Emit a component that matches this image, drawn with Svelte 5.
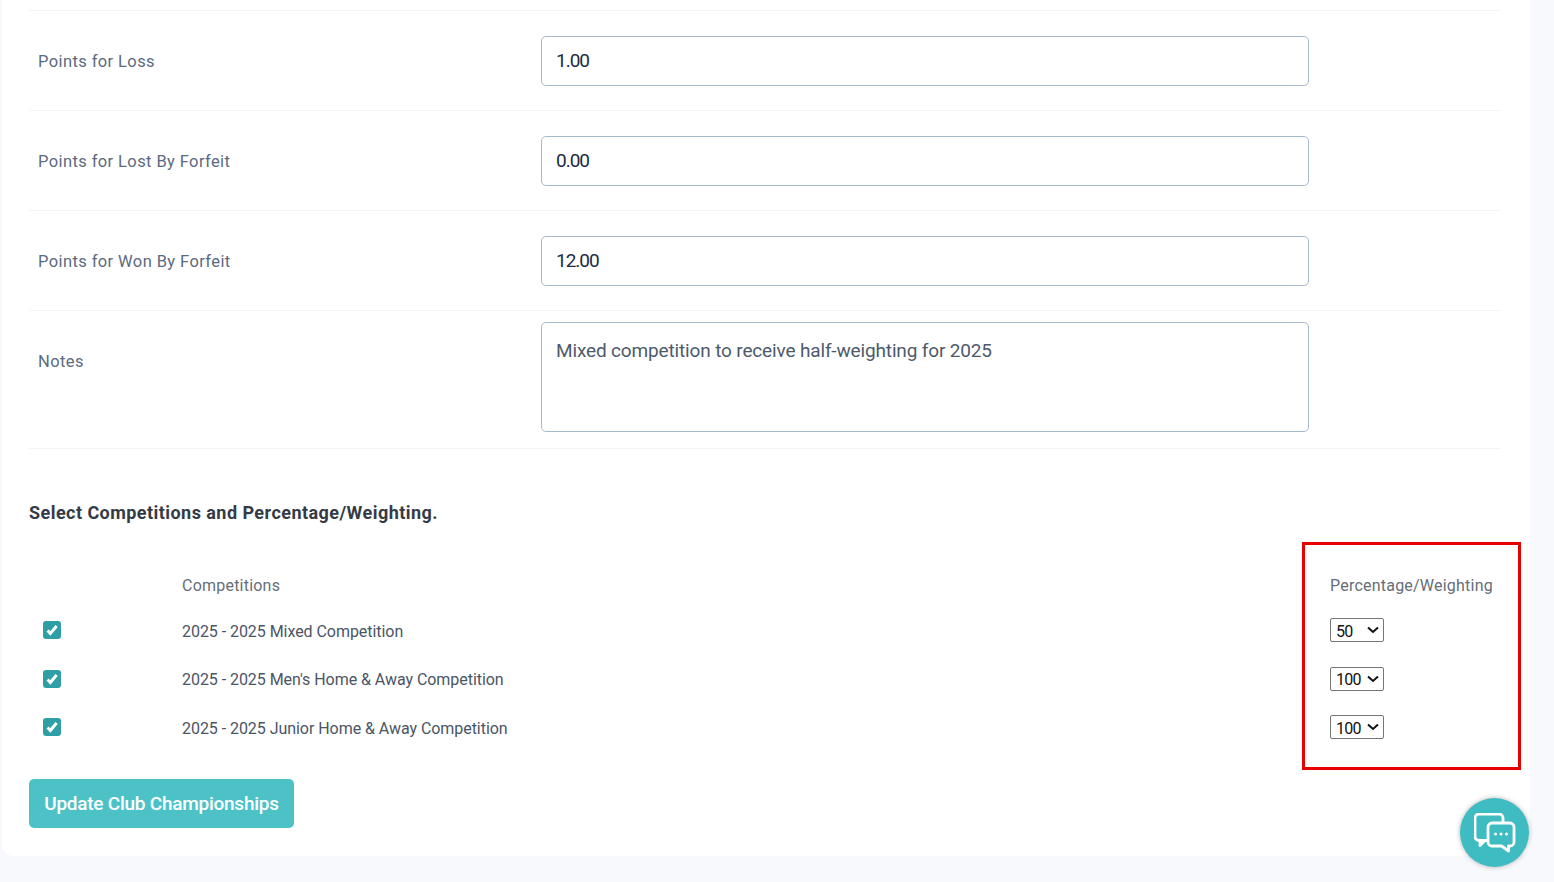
<script>
  const fields = [
    { label: "Points for Loss", value: "1.00" },
    { label: "Points for Lost By Forfeit", value: "0.00" },
    { label: "Points for Won By Forfeit", value: "12.00" },
  ];

  const competitions = [
    { name: "2025 - 2025 Mixed Competition", weight: "50" },
    { name: "2025 - 2025 Men's Home & Away Competition", weight: "100" },
    { name: "2025 - 2025 Junior Home & Away Competition", weight: "100" },
  ];

  const weights = ["25", "50", "75", "100"];
</script>

<div class="card">
  {#each fields as field}
    <div class="row">
      <label class="label" for={field.label}>{field.label}</label>
      <input class="control" id={field.label} type="text" value={field.value} />
    </div>
  {/each}

  <div class="row notes">
    <label class="label" for="notes">Notes</label>
    <textarea class="control area" id="notes">Mixed competition to receive half-weighting for 2025</textarea>
  </div>

  <h3>Select Competitions and Percentage/Weighting.</h3>

  <div class="comps">
    <div class="head"></div>
    <div class="head">Competitions</div>
    <div class="head">Percentage/Weighting</div>
    {#each competitions as comp}
      <label class="tick">
        <input type="checkbox" checked />
        <svg viewBox="0 0 18 18" width="18" height="18" aria-hidden="true">
          <path d="M4.600 9.600l2.700 2.900 6.300-7.500" fill="none" stroke="#fff" stroke-width="3" />
        </svg>
      </label>
      <div class="name">{comp.name}</div>
      <div class="pick">
        <select class="weight" value={comp.weight}>
          {#each weights as w}
            <option value={w}>{w}</option>
          {/each}
        </select>
        <svg viewBox="0 0 12 8" width="12" height="8" aria-hidden="true">
          <path d="M1 1.500l5 4.500 5-4.500" fill="none" stroke="#111" stroke-width="2" />
        </svg>
      </div>
    {/each}
  </div>

  <button class="submit" type="button">Update Club Championships</button>
</div>

<div class="highlight"></div>

<button class="chat" type="button" aria-label="Chat">
  <svg viewBox="0 0 42 40" width="42" height="40" fill="none" stroke="#fff" stroke-width="2.800" stroke-linejoin="round">
    <path d="M14 27.500H5a4 4 0 0 1-4-4V5a4 4 0 0 1 4-4h20a4 4 0 0 1 4 4v5" />
    <path d="M6 27.500v5l5-5" />
    <path d="M18 10h18a4 4 0 0 1 4 4v15a4 4 0 0 1-4 4h-1.500v5l-7-5H18a4 4 0 0 1-4-4V14a4 4 0 0 1 4-4z" />
    <circle cx="21.500" cy="21" r="1.500" fill="#fff" stroke="none" />
    <circle cx="27" cy="21" r="1.500" fill="#fff" stroke="none" />
    <circle cx="32.500" cy="21" r="1.500" fill="#fff" stroke="none" />
  </svg>
</button>

<style>
  :global(body) {
    background: #f7f9fd;
    font-family: Roboto, "Liberation Sans", sans-serif;
    height: 882px;
    overflow: hidden;
  }

  .card {
    position: relative;
    box-sizing: border-box;
    width: 1528px;
    height: 856px;
    margin-left: 2px;
    padding: 10px 29px 0 27px;
    background: #fff;
    border-radius: 0 0 12px 12px;
  }

  .row {
    display: flex;
    align-items: center;
    box-sizing: border-box;
    height: 100px;
    border-top: 1px solid #f1f4f8;
  }

  .notes {
    height: 139px;
    padding: 10px 0 16px;
    border-bottom: 1px solid #f1f4f8;
  }

  .notes .label {
    align-self: flex-start;
    margin-top: 29px;
  }

  .label {
    width: 512px;
    padding: 2px 0 0 9px;
    box-sizing: border-box;
    font-size: 16.500px;
    letter-spacing: 0.4px;
    color: #5b6a80;
  }

  .control {
    box-sizing: border-box;
    width: 768px;
    height: 50px;
    padding: 0 14px;
    border: 1px solid #a6bacd;
    border-radius: 5px;
    background: #fff;
    font-family: inherit;
    font-size: 19px;
    letter-spacing: -1px;
    color: #1c2a44;
  }

  .area {
    height: 110px;
    padding: 16px 14px;
    resize: none;
    letter-spacing: -0.150px;
    color: #4d5a6b;
  }

  h3 {
    margin: 52px 0 0;
    font-size: 18px;
    line-height: 24px;
    font-weight: 700;
    letter-spacing: 0.450px;
    color: #343b46;
  }

  .comps {
    display: grid;
    grid-template-columns: 153px 1fr 171px;
    grid-template-rows: 42px 48.500px 48.500px 48.500px;
    align-items: center;
    margin-top: 39px;
    font-size: 16px;
    color: #4a5566;
  }

  .name {
    letter-spacing: -0.050px;
    padding-top: 2px;
  }

  .head {
    color: #666e78;
    font-size: 16px;
    letter-spacing: 0.220px;
  }

  .tick {
    position: relative;
    display: block;
    width: 18px;
    height: 18px;
    margin-left: 14px;
  }

  .tick input {
    appearance: none;
    display: block;
    width: 18px;
    height: 18px;
    margin: 0;
    border-radius: 3px;
    background: #2f9fa6;
  }

  .tick svg {
    position: absolute;
    inset: 0;
  }

  .pick {
    position: relative;
    width: 54px;
    height: 24px;
  }

  .pick svg {
    position: absolute;
    right: 5px;
    top: 8px;
    pointer-events: none;
  }

  .weight {
    appearance: none;
    display: block;
    box-sizing: border-box;
    width: 54px;
    height: 24px;
    padding: 2px 0 0 5px;
    border: 1px solid #767676;
    border-radius: 2px;
    font-family: inherit;
    font-size: 16px;
    letter-spacing: -0.800px;
    background: #fff;
    color: #111;
  }

  .submit {
    display: block;
    width: 265px;
    height: 49px;
    margin-top: 27px;
    padding: 1px 0 0;
    border: 0;
    border-radius: 5px;
    background: #4dc2c6;
    color: #fff;
    font-family: inherit;
    font-size: 19px;
    font-weight: 500;
    letter-spacing: -0.250px;
  }

  .highlight {
    position: absolute;
    left: 1302px;
    top: 542px;
    width: 213px;
    height: 222px;
    border: 3px solid #e60000;
  }

  .chat {
    position: absolute;
    left: 1460px;
    top: 798px;
    display: flex;
    align-items: center;
    justify-content: center;
    width: 69px;
    height: 69px;
    padding: 0;
    border: 0;
    border-radius: 50%;
    background: #3fbcc1;
    box-shadow: 0 0 5px rgba(0, 0, 0, 0.3);
  }
</style>
